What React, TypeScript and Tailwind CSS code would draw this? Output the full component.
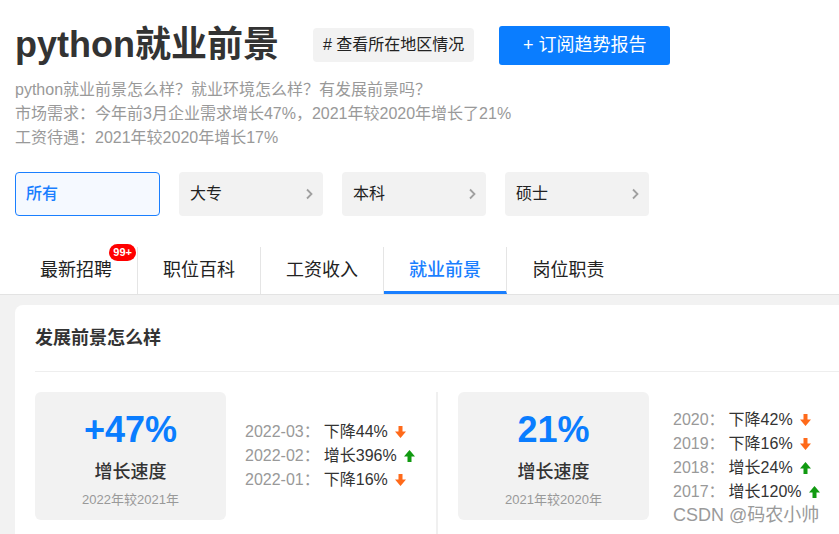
import React from "react";

const FONT = { fontFamily: '"Liberation Sans", Arial, "Noto Sans CJK SC", sans-serif' };

function Down() {
  return (
    <svg width="11" height="12" viewBox="0 0 11 12" className="ml-[7px] shrink-0">
      <path d="M3.5 0 H7.5 V5.5 H11 L5.5 12 L0 5.5 H3.5 Z" fill="#ff6a1a" />
    </svg>
  );
}
function Up() {
  return (
    <svg width="11" height="12" viewBox="0 0 11 12" className="ml-[7px] shrink-0">
      <path d="M3.5 12 H7.5 V6.5 H11 L5.5 0 L0 6.5 H3.5 Z" fill="#119a11" />
    </svg>
  );
}

function Chevron() {
  return (
    <svg width="8" height="12" viewBox="0 0 8 12">
      <path d="M2 1.5 L6.5 6 L2 10.5" stroke="#a0a0a0" strokeWidth="1.8" fill="none" />
    </svg>
  );
}

type Row = { label: string; value: string; up: boolean };

function StatBox({ big, sub }: { big: string; sub: string }) {
  return (
    <div className="w-[191px] h-[128px] shrink-0 bg-[#f2f2f2] rounded-[6px] flex flex-col items-center">
      <div className="mt-[18px] text-[36px] leading-[40px] font-bold text-[#0a7dff]">{big}</div>
      <div className="mt-[10px] text-[18px] leading-[24px] font-medium text-[#333]">增长速度</div>
      <div className="mt-[7px] text-[13px] leading-[18px] text-[#999]">{sub}</div>
    </div>
  );
}

function List({ rows, gap }: { rows: Row[]; gap: string }) {
  return (
    <div className="flex flex-col justify-center text-[16px] leading-[24px]">
      {rows.map((r) => (
        <div key={r.label} className="flex items-center">
          <span className={`text-[#999] ${gap}`}>{r.label}</span>
          <span className="text-[#333]">{r.value}</span>
          {r.up ? <Up /> : <Down />}
        </div>
      ))}
    </div>
  );
}

export default function App() {
  const tabs = ["最新招聘", "职位百科", "工资收入", "就业前景", "岗位职责"];
  return (
    <div className="w-full h-[534px] bg-white overflow-hidden relative" style={FONT}>
      <div className="px-[15px]">
        <div className="flex items-center h-[50px] mt-[20px]">
          <h1 className="text-[36px] leading-none font-bold text-[#333]">python就业前景</h1>
          <div className="ml-[34px] h-[34px] px-[10px] flex items-center bg-[#f2f2f2] rounded-[4px] text-[16px] text-[#222]">
            # 查看所在地区情况
          </div>
          <div className="ml-[25px] h-[39px] w-[171px] flex items-center justify-center bg-[#0a7dff] rounded-[3px] text-[18px] text-white">
            + 订阅趋势报告
          </div>
        </div>
        <div className="mt-[8px] text-[16px] leading-[24px] text-[#999]">
          <p>python就业前景怎么样？就业环境怎么样？有发展前景吗？</p>
          <p>市场需求：今年前3月企业需求增长47%，2021年较2020年增长了21%</p>
          <p>工资待遇：2021年较2020年增长17%</p>
        </div>
        <div className="mt-[22px] flex gap-[19px]">
          <div className="w-[145px] h-[44px] flex items-center px-[10px] border border-[#1a7fff] bg-[#f5f9ff] rounded-[4px] text-[16px] font-medium text-[#1a7fff]">
            所有
          </div>
          {["大专", "本科", "硕士"].map((t) => (
            <div
              key={t}
              className="w-[144px] h-[44px] flex items-center justify-between pl-[11px] pr-[10px] bg-[#f2f2f2] rounded-[4px] text-[16px] text-[#222]"
            >
              <span>{t}</span>
              <Chevron />
            </div>
          ))}
        </div>
        <div className="mt-[31px] flex h-[47px]">
          {tabs.map((t, i) => {
            const active = i === 3;
            return (
              <div
                key={t}
                className={`relative w-[123px] h-full flex items-center justify-center text-[18px] ${
                  i < tabs.length - 1 ? "border-r border-[#e5e5e5]" : ""
                } ${active ? "text-[#1a7fff] font-medium border-b-[3px] border-b-[#1a7fff] pt-[3px]" : "text-[#222]"}`}
              >
                {t}
                {i === 0 && (
                  <span className="absolute top-[-3px] right-[1px] h-[17px] px-[4px] rounded-full bg-[#f00] text-white text-[11px] font-bold leading-[17px]">
                    99+
                  </span>
                )}
              </div>
            );
          })}
        </div>
      </div>
      <div className="border-t border-[#e3e3e3] bg-[#f2f2f2] pt-[10px] pl-[15px] h-[300px]">
        <div className="w-[1000px] h-[300px] bg-white rounded-[8px] pt-[20px] pl-[20px]">
          <div className="text-[18px] leading-[27px] font-bold text-[#333]">发展前景怎么样</div>
          <div className="mt-[19px] h-px bg-[#eeeeee]" />
          <div className="mt-[20px] flex items-start">
            <div className="w-[401px] h-[128px] flex items-center">
              <StatBox big="+47%" sub="2022年较2021年" />
              <div className="ml-[19px]">
                <List
                  gap="mr-[4px]"
                  rows={[
                    { label: "2022-03：", value: "下降44%", up: false },
                    { label: "2022-02：", value: "增长396%", up: true },
                    { label: "2022-01：", value: "下降16%", up: false },
                  ]}
                />
              </div>
            </div>
            <div className="border-l-2 border-[#f0f0f0] pl-[20px] h-[200px]">
              <div className="flex items-center h-[128px]">
                <StatBox big="21%" sub="2021年较2020年" />
                <div className="ml-[24px]">
                  <List
                    gap="mr-[4px]"
                    rows={[
                      { label: "2020：", value: "下降42%", up: false },
                      { label: "2019：", value: "下降16%", up: false },
                      { label: "2018：", value: "增长24%", up: true },
                      { label: "2017：", value: "增长120%", up: true },
                    ]}
                  />
                </div>
              </div>
            </div>
          </div>
        </div>
      </div>
      <div
        className="absolute left-[673px] top-[503px] text-[18px] leading-[24px] text-[#9a9a9a]"
        style={{ textShadow: "1px 1px 1px #fff" }}
      >
        CSDN @码农小帅
      </div>
    </div>
  );
}
